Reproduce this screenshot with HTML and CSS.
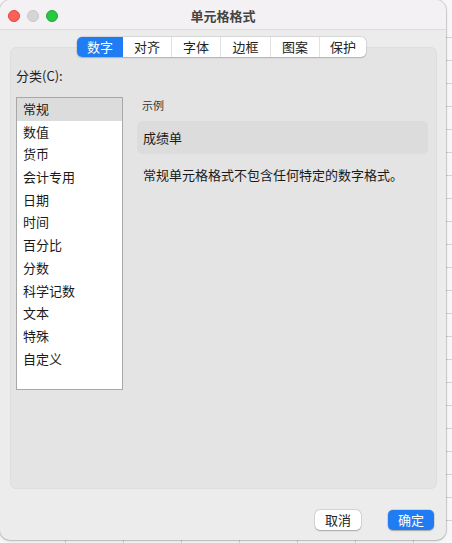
FILE: index.html
```html
<!DOCTYPE html>
<html lang="zh-CN">
<head>
<meta charset="utf-8">
<title>单元格格式</title>
<link rel="stylesheet" href="styles.css">
</head>
<body>
<div class="window">
  <div class="titlebar">
    <div class="lights">
      <span class="light red"></span>
      <span class="light gray"></span>
      <span class="light green"></span>
    </div>
    <div class="title">单元格格式</div>
    <div></div>
  </div>
  <div class="content">
    <div class="tabs">
      <span class="tab active">数字</span>
      <span class="tab">对齐</span>
      <span class="tab">字体</span>
      <span class="tab wide">边框</span>
      <span class="tab">图案</span>
      <span class="tab last">保护</span>
    </div>
    <div class="panel">
      <div class="label">分类(C):</div>
      <div class="cols">
        <ul class="list">
          <li class="sel">常规</li>
          <li>数值</li>
          <li>货币</li>
          <li>会计专用</li>
          <li>日期</li>
          <li>时间</li>
          <li>百分比</li>
          <li>分数</li>
          <li>科学记数</li>
          <li>文本</li>
          <li>特殊</li>
          <li>自定义</li>
        </ul>
        <div class="right">
          <div class="sample-label">示例</div>
          <div class="sample">成绩单</div>
          <div class="desc">常规单元格格式不包含任何特定的数字格式。</div>
        </div>
      </div>
    </div>
    <div class="buttons">
      <button class="btn">取消</button>
      <button class="btn primary">确定</button>
    </div>
  </div>
</div>
</body>
</html>
```
FILE: styles.css
```css
html, body {
  margin: 0;
  padding: 0;
}
body {
  width: 452px;
  height: 544px;
  overflow: hidden;
  font-family: "Noto Sans CJK SC", "Noto Sans", sans-serif;
  font-size: 13px;
  color: #1e1e1e;
  background-color: #f7f7f7;
  background-image:
    repeating-linear-gradient(to bottom, transparent 0, transparent 22px, #d4d4d4 22px, #d4d4d4 23px),
    repeating-linear-gradient(to right, transparent 0, transparent 57px, #d4d4d4 57px, #d4d4d4 58px);
  background-position: 0 15px, 8px 0;
}
.window {
  width: 446px;
  height: 540px;
  border-radius: 10px;
  background: #ececec;
  box-shadow: 0 0 0 1px rgba(0,0,0,0.12), 0 1px 3px rgba(0,0,0,0.18);
  display: flex;
  flex-direction: column;
  overflow: hidden;
}
.titlebar {
  height: 29px;
  flex: none;
  background: #f3f1f3;
  border-bottom: 1px solid #dcdcdc;
  display: grid;
  grid-template-columns: 1fr auto 1fr;
  align-items: center;
}
.lights {
  display: flex;
  gap: 7px;
  padding-left: 8px;
  padding-top: 2px;
}
.light {
  width: 12px;
  height: 12px;
  border-radius: 50%;
  box-sizing: border-box;
}
.red { background: #fe5f57; border: 0.5px solid #e0443e; }
.gray { background: #d5d5d5; border: 0.5px solid #c8c8c8; }
.green { background: #28c840; border: 0.5px solid #1eaa32; }
.title {
  font-weight: bold;
  font-size: 13px;
  color: #444;
  padding-top: 1px;
}
.content {
  flex: 1;
  display: flex;
  flex-direction: column;
  padding: 7px 9px 0 10px;
}
.tabs {
  align-self: center;
  display: flex;
  position: relative;
  z-index: 1;
  margin-left: -4px;
  background: #fff;
  border-radius: 5px;
  box-shadow: 0 0 0 0.5px rgba(0,0,0,0.12), 0 0.5px 1.5px rgba(0,0,0,0.18);
  height: 20px;
}
.tab {
  height: 20px;
  line-height: 20px;
  width: 49px;
  text-align: center;
  font-size: 13px;
  color: #222;
  box-sizing: border-box;
  border-right: 1px solid #e2e2e2;
}
.tab.wide { width: 50px; }
.tab.last { border-right: none; width: 46px; }
.tab.active {
  width: 46px;
  background: #1f7cf3;
  color: #fff;
  border-radius: 5px 0 0 5px;
  border-right: none;
}
.panel {
  margin-top: -10px;
  height: 442px;
  box-sizing: border-box;
  background: #e4e4e4;
  border: 1px solid #dedede;
  border-radius: 6px;
  padding: 19px 8px 0 5px;
}
.label {
  line-height: 18px;
  color: #222;
}
.cols {
  margin-top: 12px;
  display: grid;
  grid-template-columns: 107px 1fr;
  column-gap: 14px;
}
.list {
  list-style: none;
  margin: 0;
  padding: 0;
  height: 293px;
  box-sizing: border-box;
  background: #fff;
  border: 1px solid #a8a8a8;
  box-shadow: inset 0 1px 0 #cfcfcf;
}
.list li {
  height: 22.7px;
  line-height: 22.7px;
  padding-left: 6px;
  color: #1a1a1a;
}
.list li.sel {
  background: #dcdcdc;
}
.right {
  padding-top: 1px;
}
.sample-label {
  font-size: 11px;
  line-height: 14px;
  padding-left: 5px;
  color: #333;
}
.sample {
  margin-top: 9px;
  height: 33px;
  line-height: 33px;
  padding-left: 6px;
  background: #dcdcdc;
  border-radius: 5px;
  color: #1a1a1a;
}
.desc {
  margin-top: 12px;
  line-height: 18px;
  padding-left: 6px;
  color: #1a1a1a;
}
.buttons {
  display: flex;
  justify-content: flex-end;
  gap: 27px;
  padding: 21px 3px 0 0;
}
.btn {
  font-family: inherit;
  font-size: 13px;
  height: 20px;
  line-height: 20px;
  padding: 0;
  width: 46px;
  border: none;
  border-radius: 5px;
  background: #fff;
  color: #222;
  box-shadow: 0 0 0 0.5px rgba(0,0,0,0.12), 0 0.5px 1.5px rgba(0,0,0,0.25);
}
.btn.primary {
  background: #1f7cf3;
  color: #fff;
}
```
